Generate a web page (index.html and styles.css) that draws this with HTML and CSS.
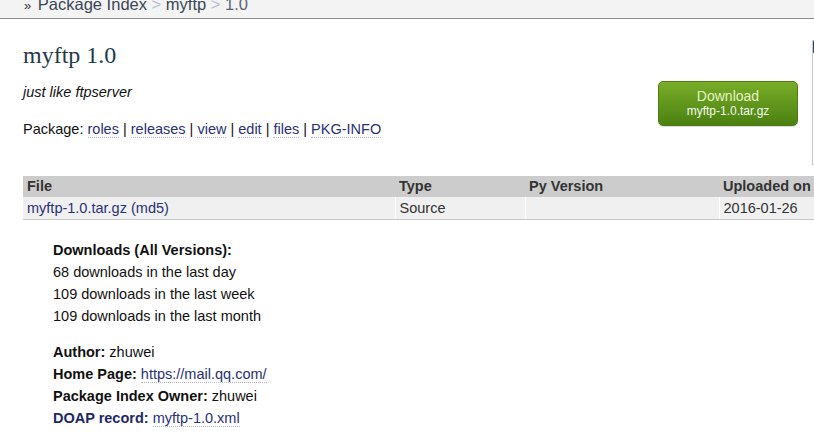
FILE: index.html
```html
<!DOCTYPE html>
<html>
<head>
<meta charset="utf-8">
<link rel="stylesheet" href="styles.css">
</head>
<body>
<div class="crumbbar">
  <div class="crumbs"><span class="raquo">&raquo;</span> <a class="crumb" href="#">Package Index</a> <span class="sep">&gt;</span> <a class="crumb" href="#">myftp</a> <span class="sep">&gt;</span> <span class="crumb-cur">1.0</span></div>
</div>
<div class="page">
  <div class="main">
    <div class="top">
      <div class="intro">
        <h1 class="title">myftp 1.0</h1>
        <p class="summary">just like ftpserver</p>
        <p class="pkglinks">Package: <a href="#">roles</a> | <a href="#">releases</a> | <a href="#">view</a> | <a href="#">edit</a> | <a href="#">files</a> | <a href="#">PKG-INFO</a></p>
      </div>
      <a class="dlbtn" href="#"><span class="dl-main">Download</span><span class="dl-file">myftp-1.0.tar.gz</span></a>
    </div>
    <table class="files">
      <colgroup><col class="c-file"><col class="c-type"><col class="c-py"><col class="c-up"></colgroup>
      <thead><tr><th>File</th><th>Type</th><th>Py Version</th><th>Uploaded on</th></tr></thead>
      <tbody><tr><td><a href="#" class="plain">myftp-1.0.tar.gz</a> <a href="#" class="plain">(md5)</a></td><td>Source</td><td></td><td>2016-01-26</td></tr></tbody>
    </table>
    <ul class="meta">
      <li><strong>Downloads (All Versions):</strong></li>
      <li>68 downloads in the last day</li>
      <li>109 downloads in the last week</li>
      <li>109 downloads in the last month</li>
    </ul>
    <ul class="meta meta2">
      <li><strong>Author:</strong> zhuwei</li>
      <li><strong>Home Page:</strong> <a href="#">https://mail.qq.com/</a></li>
      <li><strong>Package Index Owner:</strong> zhuwei</li>
      <li><strong class="doap">DOAP record:</strong> <a href="#">myftp-1.0.xml</a></li>
    </ul>
  </div>
  <div class="sidebar"><div class="side-head"></div></div>
</div>
</body>
</html>
```
FILE: styles.css
```css
html, body { margin: 0; padding: 0; overflow: hidden; background: #fff; }
body { font-family: "Liberation Sans", Arial, sans-serif; font-size: 14.5px; color: #111; }
a { color: #28307a; text-decoration: none; border-bottom: 1px dotted #b0b4c8; }
a.plain { border-bottom: none; color: #28307a; }

.crumbbar { height: 18px; background: #f3f3f3; border-bottom: 1px solid #8a8a8a; overflow: hidden; }
.crumbs { margin-top: -6px; padding-left: 24px; font-size: 16.5px; line-height: 20px; color: #3a4658; white-space: nowrap; }
.crumbs a.crumb { color: #3a4658; border-bottom: none; }
.raquo { font-size: 13px; color: #333; margin-right: 2px; }
.sep { color: #b8c0cc; }
.crumb-cur { color: #5a6472; }

.page { display: flex; align-items: flex-start; }
.main { width: 775px; padding-left: 23px; flex: none; }
.sidebar { flex: none; margin-left: 14px; margin-top: 21px; width: 150px; height: 123px; border: 1px solid #c8c8c8; }
.side-head { height: 12px; background: #2c4670; }

.top { display: flex; justify-content: space-between; align-items: flex-start; }
.title { margin: 22px 0 0; font-family: "Liberation Serif", Georgia, serif; font-weight: normal; font-size: 24px; line-height: 28px; color: #23394a; }
.summary { margin: 14px 0 0; font-style: italic; line-height: 18px; }
.pkglinks { margin: 19px 0 0; line-height: 18px; }

.dlbtn { margin-top: 62px; width: 138px; height: 43px; border: 1px solid #4f7f14; border-radius: 5px; background: linear-gradient(#78ad28, #4c8112); display: flex; flex-direction: column; align-items: center; justify-content: center; box-shadow: 0 1px 1px rgba(0,0,0,0.15); }
.dl-main { font-size: 14px; line-height: 15px; color: #e4f3c4; }
.dl-file { font-size: 12px; line-height: 14px; color: #f4faec; }

.files { margin-top: 38px; border-collapse: collapse; table-layout: fixed; width: 846px; }
.c-file { width: 372px; }
.c-type { width: 130px; }
.c-py { width: 194px; }
.c-up { width: 150px; }
.files th { background: #cccccc; color: #333; text-align: left; font-weight: bold; height: 21px; padding: 0 4px; line-height: 21px; }
.files td { background: #f0f0f0; color: #333; height: 21px; padding: 1px 4px 0; line-height: 21px; border-left: 1px solid #fff; border-bottom: 1px solid #c8c8c8; }
.files td:first-child { border-left: none; }

.meta { list-style: none; margin: 19px 0 0; padding: 0 0 0 30px; line-height: 22px; }
.meta2 { margin-top: 14px; }
.meta strong { color: #111; }
.meta strong.doap { color: #1c2868; }
```
